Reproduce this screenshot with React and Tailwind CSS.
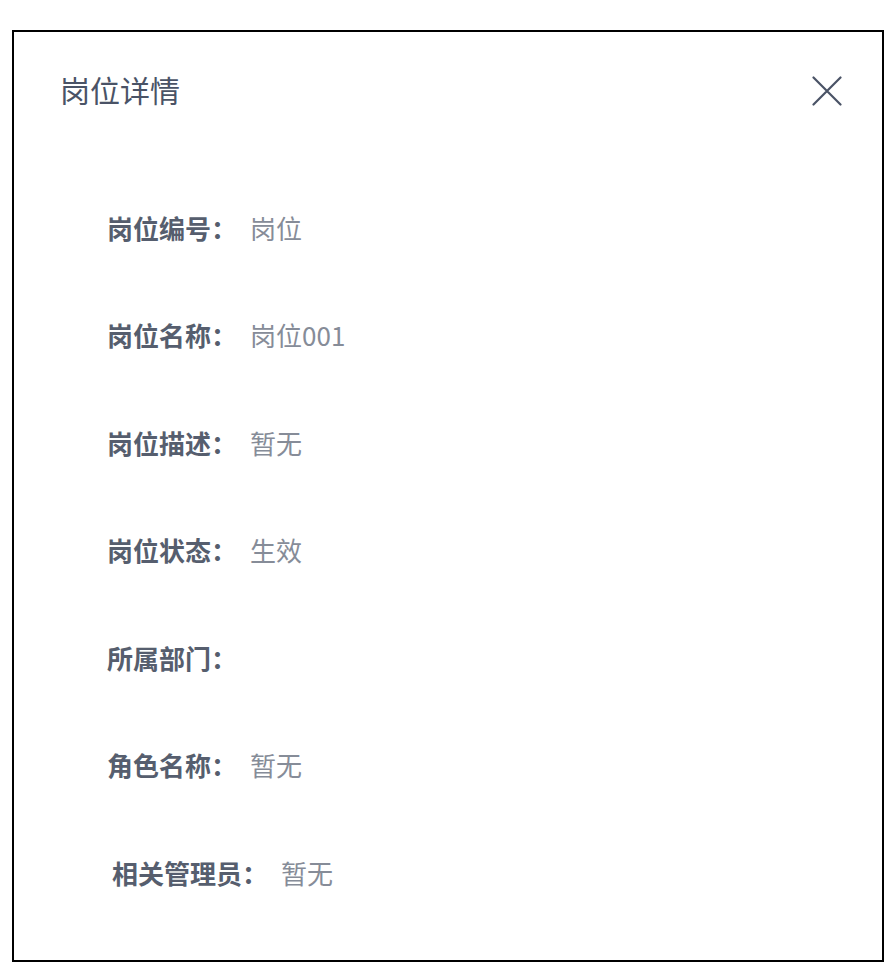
import React from "react";

const rows = [
  { label: "岗位编号：", value: "岗位" },
  { label: "岗位名称：", value: "岗位001" },
  { label: "岗位描述：", value: "暂无" },
  { label: "岗位状态：", value: "生效" },
  { label: "所属部门：", value: "" },
  { label: "角色名称：", value: "暂无" },
  { label: "相关管理员：", value: "暂无", extra: true },
];

export default function App() {
  return (
    <div
      className="w-[896px] h-[980px] bg-white pt-[30px] pl-[12px]"
      style={{ fontFamily: '"Noto Sans CJK SC", "Noto Sans", sans-serif' }}
    >
      <div className="w-[872px] h-[932px] border-2 border-black">
        <div className="flex items-center justify-between pl-[46px] pr-[40px] pt-[40px]">
          <span className="text-[30px] leading-[30px] text-[#4a5366]">岗位详情</span>
          <svg width="30" height="30" viewBox="0 0 30 30" className="mt-[4px]">
            <path d="M1.5 1.5 L28.5 28.5 M28.5 1.5 L1.5 28.5" stroke="#4a5366" strokeWidth="2.2" strokeLinecap="round" />
          </svg>
        </div>
        <div className="mt-[68px] flex flex-col pl-[93px]">
          {rows.map((r, i) => (
            <div
              key={i}
              className={`flex items-center h-[107.5px] text-[26px] leading-[26px] ${r.extra ? "pl-[5px]" : ""}`}
            >
              <span className="font-bold text-[#565e6e]">{r.label}</span>
              <span className="ml-[13px] text-[#868c98]">{r.value}</span>
            </div>
          ))}
        </div>
      </div>
    </div>
  );
}
